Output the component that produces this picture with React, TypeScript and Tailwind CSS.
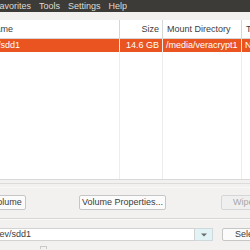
import React from "react";

export default function App() {
  return (
    <div className="w-[250px] h-[250px] overflow-hidden bg-[#f2f1f0] flex flex-col font-['Liberation_Sans',sans-serif] text-[9px] leading-none text-[#3c3c3c]">
      {/* menu bar */}
      <div className="h-[12px] shrink-0 bg-[#3c3b37] text-[#dfdbd2] flex items-center gap-2 whitespace-nowrap">
        <span className="ml-[-6px]">Favorites</span>
        <span>Tools</span>
        <span>Settings</span>
        <span>Help</span>
      </div>
      {/* toolbar band */}
      <div className="h-[8px] shrink-0 bg-[#f2f1f0]" />
      {/* list */}
      <div className="h-[160px] shrink-0 bg-white flex border-b border-[#d8d8d8] whitespace-nowrap">
        <div className="w-[120px] shrink-0 flex flex-col border-r border-[#ededed]">
          <div className="h-[19px] flex items-center border-b border-[#d6d6d6] border-r border-r-[#d6d6d6] -mr-px">
            <span className="ml-[-11px]">Name</span>
          </div>
          <div className="h-[13px] bg-[#e95420] text-white flex items-center">
            <span className="ml-[-19px]">/dev/sdd1</span>
          </div>
        </div>
        <div className="w-[43px] shrink-0 flex flex-col border-r border-[#ededed]">
          <div className="h-[19px] flex items-center justify-end pr-[3px] border-b border-[#d6d6d6] border-r border-r-[#d6d6d6] -mr-px">
            Size
          </div>
          <div className="h-[13px] bg-[#e95420] text-white flex items-center justify-end pr-[3px]">
            14.6 GB
          </div>
        </div>
        <div className="w-[79px] shrink-0 flex flex-col border-r border-[#ededed]">
          <div className="h-[19px] flex items-center pl-[4px] border-b border-[#d6d6d6] border-r border-r-[#d6d6d6] -mr-px">
            Mount Directory
          </div>
          <div className="h-[13px] bg-[#e95420] text-white flex items-center pl-[3px]">
            /media/veracrypt1
          </div>
        </div>
        <div className="flex-1 flex flex-col">
          <div className="h-[19px] flex items-center pl-[4px] border-b border-[#d6d6d6]">Type</div>
          <div className="h-[13px] bg-[#e95420] text-white flex items-center pl-[3px]">Normal</div>
        </div>
      </div>
      {/* frame lines */}
      <div className="h-[3px] shrink-0" />
      <div className="h-[5px] shrink-0 border-t border-[#dcdcdc] border-b border-b-[#f8f8f8]" />
      {/* buttons */}
      <div className="h-[7px] shrink-0" />
      <div className="h-[15px] shrink-0 flex items-stretch whitespace-nowrap">
        <div className="w-[68px] ml-[-42px] shrink-0 bg-[#fbfbfb] border border-[#c6c6c6] rounded-[2px] flex items-center justify-center">
          Create Volume
        </div>
        <div className="w-[87px] ml-[53px] shrink-0 bg-[#fbfbfb] border border-[#c6c6c6] rounded-[2px] flex items-center justify-center">
          Volume Properties...
        </div>
        <div className="w-[60px] ml-[55px] shrink-0 bg-[#efefef] border border-[#d6d6d6] rounded-[2px] flex items-center pl-[11px] text-[#a8a8a8]">
          Wipe Cache
        </div>
      </div>
      <div className="h-[8px] shrink-0" />
      <div className="h-[2px] shrink-0 border-t border-[#d6d6d6] border-b border-b-[#fafafa]" />
      <div className="h-[8px] shrink-0" />
      {/* combo */}
      <div className="h-[13px] shrink-0 flex items-stretch whitespace-nowrap">
        <div className="w-[195px] shrink-0 bg-white border-y border-r border-[#d2d2d2] flex items-center">
          <span className="ml-[-8px]">/dev/sdd1</span>
        </div>
        <div className="w-[18px] shrink-0 bg-[#e2f3f6] border-y border-r border-[#cfd9dc] flex items-center justify-center">
          <svg width="6" height="4" viewBox="0 0 6 4">
            <path d="M0 0.5 L6 0.5 L3 3.5 Z" fill="#6a6a6a" />
          </svg>
        </div>
        <div className="w-[60px] ml-[9px] shrink-0 bg-[#fbfbfb] border border-[#c6c6c6] rounded-[2px] flex items-center pl-[12px]">
          Select Device...
        </div>
      </div>
      <div className="h-[5px] shrink-0" />
      <div className="h-[3px] shrink-0 flex">
        <div className="ml-[40px] w-[7px] border-x border-t border-[#c8c8c8] rounded-t-[1px]" />
      </div>
    </div>
  );
}
